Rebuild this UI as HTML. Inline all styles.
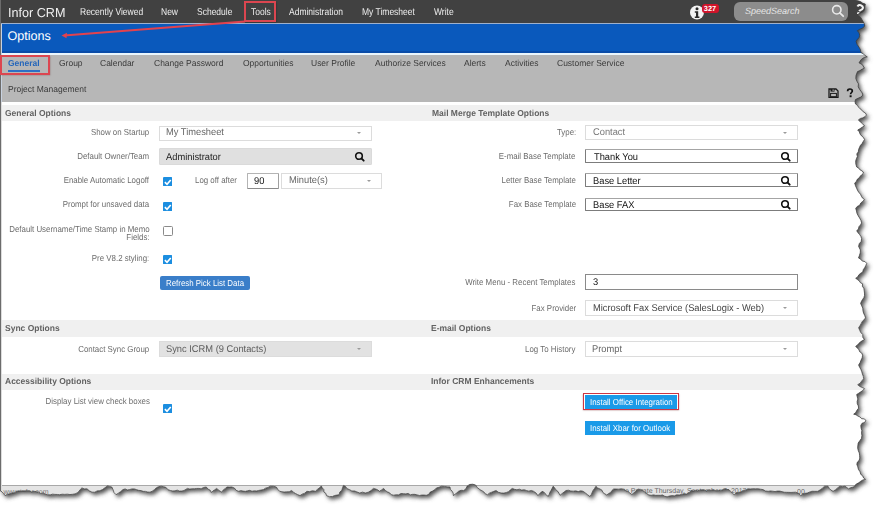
<!DOCTYPE html>
<html><head><meta charset="utf-8"><style>
html,body{margin:0;padding:0;background:#fff;width:879px;height:509px;overflow:hidden}
body{font-family:"Liberation Sans",sans-serif;position:relative;text-rendering:geometricPrecision}
#paper{position:absolute;left:0;top:0;width:879px;height:509px;clip-path:polygon(0px 0px, 855.3px 0.0px, 857.89px 0.8px, 860.49px 1.6px, 862.72px 3.27px, 865.3px 4.1px, 864.7px 7.7px, 864.4px 9.98px, 863.0px 11.8px, 860.03px 13.2px, 857.1px 14.7px, 858.8px 16.13px, 860.67px 17.4px, 861.8px 19.4px, 862.99px 21.51px, 864.2px 23.6px, 864.7px 26.0px, 862.58px 28.11px, 859.82px 29.21px, 857.3px 30.7px, 859.04px 32.78px, 859.7px 35.4px, 858.99px 37.67px, 857.39px 39.39px, 856.1px 41.3px, 857.14px 44.45px, 859.0px 47.2px, 860.4px 49.68px, 860.8px 52.5px, 863.18px 53.65px, 865.03px 55.58px, 867.3px 56.9px, 864.11px 57.52px, 861.4px 59.3px, 859.0px 62.8px, 862.4px 64.7px, 864.4px 68.2px, 862.05px 69.24px, 859.86px 70.6px, 857.5px 71.6px, 856.0px 75.5px, 855.84px 78.56px, 857.0px 81.4px, 858.44px 83.84px, 858.19px 86.82px, 859.5px 89.3px, 860.89px 91.12px, 862.2px 92.98px, 862.9px 95.2px, 860.7px 97.1px, 858.1px 98.3px, 855.5px 99.5px, 855.06px 101.75px, 855.5px 104.0px, 857.39px 105.26px, 858.56px 107.22px, 860.08px 108.85px, 861.91px 110.16px, 863.31px 111.9px, 865.36px 113.0px, 866.5px 115.0px, 864.77px 116.78px, 862.61px 117.85px, 860.22px 118.53px, 858.3px 120.0px, 860.44px 121.93px, 862.61px 123.81px, 864.5px 126.0px, 862.17px 127.23px, 860.0px 128.72px, 857.7px 130.0px, 859.29px 131.76px, 860.08px 134.08px, 861.55px 135.92px, 863.43px 137.47px, 864.5px 139.6px, 863.23px 141.53px, 862.11px 143.54px, 860.51px 145.27px, 859.5px 147.36px, 858.6px 149.5px, 858.31px 151.87px, 856.79px 153.94px, 857.38px 156.53px, 856.39px 158.73px, 855.7px 161.0px, 855.84px 164.06px, 856.7px 167.0px, 858.74px 168.13px, 860.16px 169.99px, 862.3px 171.01px, 863.6px 173.0px, 861.94px 174.51px, 860.36px 176.09px, 859.07px 177.93px, 857.27px 179.32px, 856.38px 181.51px, 854.7px 183.0px, 855.45px 185.67px, 856.58px 188.18px, 857.7px 190.7px, 858.97px 192.55px, 860.47px 194.22px, 861.4px 196.33px, 862.65px 198.2px, 864.5px 199.6px, 862.77px 201.39px, 860.82px 202.96px, 859.65px 205.31px, 857.26px 206.44px, 855.7px 208.4px, 856.48px 210.88px, 857.01px 213.46px, 858.21px 215.77px, 859.6px 218.0px, 860.88px 220.34px, 861.6px 222.9px, 860.51px 224.94px, 858.95px 226.67px, 858.49px 229.11px, 856.7px 230.7px, 857.97px 232.65px, 859.54px 234.41px, 860.83px 236.34px, 861.6px 238.6px, 861.18px 241.42px, 859.25px 243.67px, 858.6px 246.4px, 860.4px 250.0px, 860.27px 252.75px, 859.48px 255.35px, 858.5px 257.9px, 860.64px 259.15px, 862.31px 261.08px, 864.98px 261.54px, 866.7px 263.4px, 865.79px 265.58px, 864.69px 267.67px, 863.29px 269.63px, 862.8px 272.0px, 860.73px 273.24px, 858.91px 274.77px, 857.68px 276.96px, 855.7px 278.3px, 857.5px 279.58px, 859.27px 280.9px, 860.54px 282.85px, 862.6px 283.8px, 862.35px 286.24px, 863.84px 288.4px, 864.19px 290.75px, 864.49px 293.1px, 864.5px 295.5px, 863.86px 297.64px, 862.57px 299.46px, 861.46px 301.37px, 860.6px 303.4px, 861.67px 305.75px, 862.76px 308.1px, 862.96px 310.72px, 863.6px 313.2px, 864.72px 315.48px, 865.5px 317.9px, 864.04px 319.81px, 862.22px 321.45px, 861.14px 323.63px, 859.96px 325.73px, 858.6px 327.7px, 859.63px 330.13px, 860.74px 332.53px, 862.7px 334.5px, 862.82px 337.39px, 864.5px 339.5px, 862.5px 340.55px, 860.66px 341.81px, 858.97px 343.25px, 857.55px 345.06px, 855.7px 346.3px, 857.19px 347.99px, 858.9px 349.52px, 859.69px 351.76px, 861.7px 353.04px, 862.6px 355.2px, 862.16px 357.88px, 860.98px 360.25px, 860.04px 362.73px, 858.6px 365.0px, 859.64px 367.22px, 860.86px 369.39px, 861.76px 371.66px, 862.39px 374.03px, 863.29px 376.31px, 863.6px 378.8px, 861.77px 380.9px, 860.14px 383.2px, 857.7px 384.7px, 859.71px 386.45px, 862.15px 387.44px, 864.5px 388.6px, 862.85px 390.47px, 860.81px 391.83px, 858.78px 393.2px, 856.7px 394.5px, 857.21px 396.76px, 857.86px 398.99px, 857.17px 401.42px, 857.28px 403.73px, 858.33px 405.91px, 858.6px 408.2px, 856.98px 410.21px, 855.78px 412.57px, 853.7px 414.2px, 855.98px 414.72px, 857.87px 416.04px, 859.95px 416.96px, 861.63px 418.68px, 864.08px 418.86px, 865.9px 420.3px, 864.67px 422.47px, 862.05px 423.25px, 860.8px 425.4px, 861.04px 427.95px, 861.84px 430.45px, 861.56px 433.06px, 861.9px 435.6px, 861.49px 438.4px, 859.81px 440.69px, 858.2px 443.0px, 857.8px 445.8px, 857.7px 448.32px, 858.33px 450.72px, 859.33px 453.07px, 859.58px 455.53px, 859.8px 458.0px, 859.22px 460.27px, 857.46px 461.97px, 856.8px 464.2px, 857.76px 466.77px, 858.44px 469.44px, 860.02px 471.76px, 860.8px 474.4px, 862.65px 475.8px, 863.62px 478.03px, 865.5px 479.4px, 862.93px 479.93px, 860.75px 481.23px, 858.7px 482.8px, 856.73px 483.87px, 855.02px 485.26px, 853.6px 487.0px, 850.94px 487.58px, 848.5px 488.8px, 845.0px 486.2px, 842.45px 486.58px, 839.9px 486.2px, 837.62px 487.88px, 835.49px 489.76px, 833.1px 491.3px, 830.93px 490.07px, 829.23px 488.37px, 828.0px 486.2px, 824.6px 486.2px, 822.48px 488.15px, 820.2px 489.87px, 817.7px 491.3px, 814.84px 491.33px, 811.97px 491.26px, 809.2px 492.2px, 807.1px 493.12px, 804.72px 493.33px, 802.57px 494.12px, 800.7px 495.6px, 798.5px 493.37px, 795.6px 492.2px, 793.31px 492.31px, 791.02px 492.44px, 788.74px 492.36px, 786.45px 492.32px, 784.17px 492.24px, 781.91px 491.58px, 779.64px 491.11px, 777.35px 491.12px, 775.05px 491.55px, 772.77px 491.24px, 770.5px 490.96px, 768.2px 491.3px, 765.47px 491.0px, 763.1px 489.6px, 760.56px 489.24px, 758.03px 488.76px, 755.47px 488.81px, 752.92px 488.72px, 750.35px 488.96px, 747.8px 488.8px, 745.69px 490.2px, 743.07px 490.39px, 741.04px 491.97px, 738.5px 492.35px, 736.12px 493.11px, 734.1px 494.7px, 732.3px 493.1px, 730.6px 491.4px, 729.0px 489.6px, 728.0px 489.6px, 725.52px 489.1px, 723.1px 489.54px, 720.7px 490.45px, 718.26px 490.64px, 715.81px 490.73px, 713.31px 489.81px, 710.9px 490.5px, 708.69px 490.07px, 706.48px 491.0px, 704.27px 490.04px, 702.06px 489.83px, 699.84px 490.28px, 697.63px 490.71px, 695.42px 490.43px, 693.21px 491.02px, 691.0px 490.5px, 689.17px 492.79px, 686.5px 494.0px, 683.98px 493.7px, 681.62px 494.49px, 679.22px 495.01px, 676.71px 494.8px, 674.39px 495.84px, 671.88px 495.58px, 669.46px 496.0px, 667.1px 496.8px, 664.7px 496.28px, 662.6px 495.0px, 660.32px 495.35px, 658.03px 495.29px, 655.75px 495.36px, 653.47px 494.88px, 651.18px 495.34px, 648.9px 495.0px, 646.93px 493.59px, 644.78px 492.41px, 643.2px 490.5px, 640.46px 489.39px, 637.5px 489.4px, 635.77px 491.25px, 633.81px 492.84px, 631.9px 494.5px, 629.96px 493.13px, 628.2px 491.47px, 625.84px 490.77px, 623.9px 489.4px, 621.37px 488.72px, 618.8px 489.2px, 616.25px 489.06px, 613.7px 489.0px, 611.95px 490.48px, 610.69px 492.51px, 608.58px 493.56px, 606.8px 495.0px, 604.81px 493.83px, 602.94px 492.52px, 601.98px 490.19px, 600.0px 489.0px, 597.69px 487.98px, 595.9px 486.2px, 594.73px 488.28px, 593.23px 490.16px, 592.23px 492.34px, 591.31px 494.56px, 589.9px 496.5px, 587.65px 494.75px, 585.41px 492.97px, 583.1px 491.3px, 580.68px 490.79px, 578.19px 491.62px, 575.78px 490.87px, 573.31px 491.19px, 570.87px 491.04px, 568.46px 490.23px, 566.0px 490.5px, 564.03px 492.09px, 562.01px 493.63px, 560.1px 495.3px, 559.01px 493.26px, 557.8px 491.31px, 555.9px 489.89px, 554.71px 487.92px, 553.2px 486.2px, 552.17px 488.26px, 551.14px 490.31px, 549.9px 492.26px, 549.18px 494.47px, 548.1px 496.5px, 546.43px 494.73px, 544.68px 493.05px, 543.0px 491.3px, 540.9px 492.26px, 539.42px 493.95px, 537.9px 495.6px, 536.12px 493.08px, 533.6px 491.3px, 531.28px 490.44px, 528.81px 491.15px, 526.47px 490.5px, 524.14px 489.72px, 521.7px 490.1px, 519.43px 489.21px, 516.91px 489.75px, 514.56px 489.35px, 512.3px 488.4px, 510.35px 489.83px, 508.64px 491.63px, 506.3px 492.5px, 503.79px 493.11px, 501.2px 493.0px, 498.39px 492.29px, 496.1px 490.5px, 493.85px 491.34px, 491.63px 492.24px, 489.41px 493.15px, 487.5px 494.7px, 485.33px 493.83px, 483.87px 491.9px, 481.93px 490.69px, 479.9px 489.6px, 477.38px 487.64px, 475.6px 485.0px, 472.64px 484.22px, 469.6px 484.5px, 467.17px 486.04px, 465.95px 488.78px, 463.7px 490.5px, 461.0px 490.27px, 458.5px 491.3px, 456.89px 492.84px, 455.11px 494.18px, 453.4px 495.6px, 453.19px 493.2px, 452.13px 491.13px, 450.41px 489.32px, 450.0px 487.0px, 447.19px 486.83px, 444.4px 486.44px, 441.6px 486.2px, 439.12px 487.26px, 436.5px 487.9px, 434.71px 489.72px, 432.57px 491.07px, 430.2px 492.09px, 428.74px 494.36px, 426.3px 495.3px, 424.03px 495.07px, 421.74px 495.07px, 419.42px 495.51px, 417.17px 494.91px, 414.92px 494.35px, 412.63px 494.35px, 410.31px 494.82px, 408.12px 493.38px, 405.8px 493.9px, 403.36px 493.63px, 400.93px 493.51px, 398.58px 494.85px, 396.15px 494.76px, 393.75px 495.21px, 391.3px 494.7px, 389.62px 492.82px, 387.25px 491.8px, 385.2px 490.38px, 383.6px 488.4px, 381.56px 489.94px, 379.4px 491.3px, 377.65px 489.81px, 375.59px 488.96px, 373.4px 488.4px, 371.05px 490.57px, 368.3px 492.2px, 365.48px 492.96px, 362.51px 492.15px, 359.7px 493.0px, 357.18px 492.06px, 354.69px 491.03px, 351.87px 491.0px, 349.5px 489.6px, 347.14px 488.71px, 345.65px 486.58px, 343.5px 485.4px, 342.52px 487.77px, 341.89px 490.3px, 339.72px 492.12px, 339.2px 494.7px, 336.89px 495.12px, 334.56px 495.49px, 332.4px 496.5px, 329.36px 496.63px, 326.5px 495.6px, 325.9px 493.42px, 323.89px 492.01px, 323.83px 489.54px, 322.28px 487.87px, 321.3px 485.9px, 319.49px 487.87px, 317.32px 489.45px, 315.4px 491.3px, 312.53px 490.7px, 309.67px 491.62px, 306.8px 491.3px, 304.81px 493.17px, 302.25px 494.13px, 300.0px 495.6px, 297.71px 494.64px, 295.52px 493.52px, 293.45px 492.18px, 291.6px 490.5px, 289.21px 491.76px, 286.5px 491.8px, 284.2px 492.05px, 281.95px 491.73px, 279.7px 491.3px, 277.79px 489.32px, 276.3px 487.0px, 273.35px 486.24px, 270.3px 486.2px, 268.06px 487.45px, 265.6px 488.15px, 263.42px 489.54px, 260.9px 490.1px, 258.69px 490.43px, 256.5px 491.01px, 254.26px 490.81px, 252.06px 491.26px, 249.78px 490.37px, 247.58px 490.75px, 245.38px 491.37px, 243.14px 491.1px, 240.89px 490.57px, 238.7px 491.3px, 236.14px 490.33px, 234.41px 488.06px, 231.9px 487.0px, 229.35px 487.09px, 226.8px 487.0px, 225.1px 488.74px, 223.07px 490.14px, 221.7px 492.2px, 219.06px 490.42px, 216.6px 488.4px, 214.86px 489.76px, 212.97px 490.93px, 211.4px 492.5px, 210.2px 490.21px, 207.84px 488.98px, 206.3px 487.0px, 203.6px 487.46px, 201.2px 488.8px, 198.93px 488.44px, 196.64px 488.48px, 194.35px 488.73px, 192.06px 488.75px, 189.77px 489.09px, 187.5px 488.4px, 184.0px 490.5px, 181.75px 491.02px, 179.5px 491.1px, 177.25px 490.16px, 175.0px 490.84px, 172.75px 490.97px, 170.5px 490.5px, 167.95px 489.74px, 166.2px 487.55px, 163.7px 486.7px, 161.1px 486.18px, 158.5px 486.7px, 156.25px 487.87px, 154.42px 489.71px, 152.32px 491.13px, 150.0px 492.2px, 147.7px 492.05px, 145.49px 491.39px, 143.16px 491.37px, 140.99px 490.54px, 138.69px 490.36px, 136.5px 489.6px, 134.23px 488.95px, 131.97px 488.94px, 129.7px 489.53px, 127.43px 489.96px, 125.17px 488.95px, 122.9px 489.6px, 120.76px 491.51px, 118.42px 493.16px, 116.0px 494.7px, 113.99px 492.47px, 113.05px 489.65px, 111.8px 487.0px, 109.64px 486.48px, 107.5px 485.9px, 104.95px 487.75px, 102.4px 489.6px, 99.9px 490.66px, 97.2px 490.89px, 94.77px 492.22px, 92.0px 492.2px, 89.31px 490.77px, 87.0px 488.8px, 84.35px 488.92px, 81.9px 487.9px, 80.27px 489.51px, 78.87px 491.38px, 77.16px 492.9px, 75.0px 493.9px, 72.46px 494.31px, 69.92px 494.54px, 67.34px 494.18px, 64.8px 494.39px, 62.23px 494.22px, 59.7px 494.7px, 57.32px 494.48px, 54.94px 494.4px, 52.56px 494.17px, 50.18px 494.85px, 47.8px 494.7px, 45.44px 494.37px, 43.36px 492.91px, 40.78px 493.48px, 38.68px 492.13px, 36.35px 491.67px, 34.0px 491.3px, 31.57px 491.94px, 29.14px 490.83px, 26.71px 490.75px, 24.29px 491.12px, 21.86px 490.97px, 19.43px 490.86px, 17.0px 491.3px, 14.79px 492.63px, 12.23px 492.99px, 9.86px 493.87px, 7.32px 494.3px, 5.1px 495.6px, 3.7px 493.6px, 2.02px 491.88px, 0px 490.5px);}
</style></head><body>
<svg style="position:absolute;left:0;top:0" width="879" height="509">
<defs><filter id="sh" x="-5%" y="-5%" width="110%" height="110%"><feGaussianBlur stdDeviation="2"/></filter></defs>
<polygon points="0,0 855.3,0.0 857.89,0.8 860.49,1.6 862.72,3.27 865.3,4.1 864.7,7.7 864.4,9.98 863.0,11.8 860.03,13.2 857.1,14.7 858.8,16.13 860.67,17.4 861.8,19.4 862.99,21.51 864.2,23.6 864.7,26.0 862.58,28.11 859.82,29.21 857.3,30.7 859.04,32.78 859.7,35.4 858.99,37.67 857.39,39.39 856.1,41.3 857.14,44.45 859.0,47.2 860.4,49.68 860.8,52.5 863.18,53.65 865.03,55.58 867.3,56.9 864.11,57.52 861.4,59.3 859.0,62.8 862.4,64.7 864.4,68.2 862.05,69.24 859.86,70.6 857.5,71.6 856.0,75.5 855.84,78.56 857.0,81.4 858.44,83.84 858.19,86.82 859.5,89.3 860.89,91.12 862.2,92.98 862.9,95.2 860.7,97.1 858.1,98.3 855.5,99.5 855.06,101.75 855.5,104.0 857.39,105.26 858.56,107.22 860.08,108.85 861.91,110.16 863.31,111.9 865.36,113.0 866.5,115.0 864.77,116.78 862.61,117.85 860.22,118.53 858.3,120.0 860.44,121.93 862.61,123.81 864.5,126.0 862.17,127.23 860.0,128.72 857.7,130.0 859.29,131.76 860.08,134.08 861.55,135.92 863.43,137.47 864.5,139.6 863.23,141.53 862.11,143.54 860.51,145.27 859.5,147.36 858.6,149.5 858.31,151.87 856.79,153.94 857.38,156.53 856.39,158.73 855.7,161.0 855.84,164.06 856.7,167.0 858.74,168.13 860.16,169.99 862.3,171.01 863.6,173.0 861.94,174.51 860.36,176.09 859.07,177.93 857.27,179.32 856.38,181.51 854.7,183.0 855.45,185.67 856.58,188.18 857.7,190.7 858.97,192.55 860.47,194.22 861.4,196.33 862.65,198.2 864.5,199.6 862.77,201.39 860.82,202.96 859.65,205.31 857.26,206.44 855.7,208.4 856.48,210.88 857.01,213.46 858.21,215.77 859.6,218.0 860.88,220.34 861.6,222.9 860.51,224.94 858.95,226.67 858.49,229.11 856.7,230.7 857.97,232.65 859.54,234.41 860.83,236.34 861.6,238.6 861.18,241.42 859.25,243.67 858.6,246.4 860.4,250.0 860.27,252.75 859.48,255.35 858.5,257.9 860.64,259.15 862.31,261.08 864.98,261.54 866.7,263.4 865.79,265.58 864.69,267.67 863.29,269.63 862.8,272.0 860.73,273.24 858.91,274.77 857.68,276.96 855.7,278.3 857.5,279.58 859.27,280.9 860.54,282.85 862.6,283.8 862.35,286.24 863.84,288.4 864.19,290.75 864.49,293.1 864.5,295.5 863.86,297.64 862.57,299.46 861.46,301.37 860.6,303.4 861.67,305.75 862.76,308.1 862.96,310.72 863.6,313.2 864.72,315.48 865.5,317.9 864.04,319.81 862.22,321.45 861.14,323.63 859.96,325.73 858.6,327.7 859.63,330.13 860.74,332.53 862.7,334.5 862.82,337.39 864.5,339.5 862.5,340.55 860.66,341.81 858.97,343.25 857.55,345.06 855.7,346.3 857.19,347.99 858.9,349.52 859.69,351.76 861.7,353.04 862.6,355.2 862.16,357.88 860.98,360.25 860.04,362.73 858.6,365.0 859.64,367.22 860.86,369.39 861.76,371.66 862.39,374.03 863.29,376.31 863.6,378.8 861.77,380.9 860.14,383.2 857.7,384.7 859.71,386.45 862.15,387.44 864.5,388.6 862.85,390.47 860.81,391.83 858.78,393.2 856.7,394.5 857.21,396.76 857.86,398.99 857.17,401.42 857.28,403.73 858.33,405.91 858.6,408.2 856.98,410.21 855.78,412.57 853.7,414.2 855.98,414.72 857.87,416.04 859.95,416.96 861.63,418.68 864.08,418.86 865.9,420.3 864.67,422.47 862.05,423.25 860.8,425.4 861.04,427.95 861.84,430.45 861.56,433.06 861.9,435.6 861.49,438.4 859.81,440.69 858.2,443.0 857.8,445.8 857.7,448.32 858.33,450.72 859.33,453.07 859.58,455.53 859.8,458.0 859.22,460.27 857.46,461.97 856.8,464.2 857.76,466.77 858.44,469.44 860.02,471.76 860.8,474.4 862.65,475.8 863.62,478.03 865.5,479.4 862.93,479.93 860.75,481.23 858.7,482.8 856.73,483.87 855.02,485.26 853.6,487.0 850.94,487.58 848.5,488.8 845.0,486.2 842.45,486.58 839.9,486.2 837.62,487.88 835.49,489.76 833.1,491.3 830.93,490.07 829.23,488.37 828.0,486.2 824.6,486.2 822.48,488.15 820.2,489.87 817.7,491.3 814.84,491.33 811.97,491.26 809.2,492.2 807.1,493.12 804.72,493.33 802.57,494.12 800.7,495.6 798.5,493.37 795.6,492.2 793.31,492.31 791.02,492.44 788.74,492.36 786.45,492.32 784.17,492.24 781.91,491.58 779.64,491.11 777.35,491.12 775.05,491.55 772.77,491.24 770.5,490.96 768.2,491.3 765.47,491.0 763.1,489.6 760.56,489.24 758.03,488.76 755.47,488.81 752.92,488.72 750.35,488.96 747.8,488.8 745.69,490.2 743.07,490.39 741.04,491.97 738.5,492.35 736.12,493.11 734.1,494.7 732.3,493.1 730.6,491.4 729.0,489.6 728.0,489.6 725.52,489.1 723.1,489.54 720.7,490.45 718.26,490.64 715.81,490.73 713.31,489.81 710.9,490.5 708.69,490.07 706.48,491.0 704.27,490.04 702.06,489.83 699.84,490.28 697.63,490.71 695.42,490.43 693.21,491.02 691.0,490.5 689.17,492.79 686.5,494.0 683.98,493.7 681.62,494.49 679.22,495.01 676.71,494.8 674.39,495.84 671.88,495.58 669.46,496.0 667.1,496.8 664.7,496.28 662.6,495.0 660.32,495.35 658.03,495.29 655.75,495.36 653.47,494.88 651.18,495.34 648.9,495.0 646.93,493.59 644.78,492.41 643.2,490.5 640.46,489.39 637.5,489.4 635.77,491.25 633.81,492.84 631.9,494.5 629.96,493.13 628.2,491.47 625.84,490.77 623.9,489.4 621.37,488.72 618.8,489.2 616.25,489.06 613.7,489.0 611.95,490.48 610.69,492.51 608.58,493.56 606.8,495.0 604.81,493.83 602.94,492.52 601.98,490.19 600.0,489.0 597.69,487.98 595.9,486.2 594.73,488.28 593.23,490.16 592.23,492.34 591.31,494.56 589.9,496.5 587.65,494.75 585.41,492.97 583.1,491.3 580.68,490.79 578.19,491.62 575.78,490.87 573.31,491.19 570.87,491.04 568.46,490.23 566.0,490.5 564.03,492.09 562.01,493.63 560.1,495.3 559.01,493.26 557.8,491.31 555.9,489.89 554.71,487.92 553.2,486.2 552.17,488.26 551.14,490.31 549.9,492.26 549.18,494.47 548.1,496.5 546.43,494.73 544.68,493.05 543.0,491.3 540.9,492.26 539.42,493.95 537.9,495.6 536.12,493.08 533.6,491.3 531.28,490.44 528.81,491.15 526.47,490.5 524.14,489.72 521.7,490.1 519.43,489.21 516.91,489.75 514.56,489.35 512.3,488.4 510.35,489.83 508.64,491.63 506.3,492.5 503.79,493.11 501.2,493.0 498.39,492.29 496.1,490.5 493.85,491.34 491.63,492.24 489.41,493.15 487.5,494.7 485.33,493.83 483.87,491.9 481.93,490.69 479.9,489.6 477.38,487.64 475.6,485.0 472.64,484.22 469.6,484.5 467.17,486.04 465.95,488.78 463.7,490.5 461.0,490.27 458.5,491.3 456.89,492.84 455.11,494.18 453.4,495.6 453.19,493.2 452.13,491.13 450.41,489.32 450.0,487.0 447.19,486.83 444.4,486.44 441.6,486.2 439.12,487.26 436.5,487.9 434.71,489.72 432.57,491.07 430.2,492.09 428.74,494.36 426.3,495.3 424.03,495.07 421.74,495.07 419.42,495.51 417.17,494.91 414.92,494.35 412.63,494.35 410.31,494.82 408.12,493.38 405.8,493.9 403.36,493.63 400.93,493.51 398.58,494.85 396.15,494.76 393.75,495.21 391.3,494.7 389.62,492.82 387.25,491.8 385.2,490.38 383.6,488.4 381.56,489.94 379.4,491.3 377.65,489.81 375.59,488.96 373.4,488.4 371.05,490.57 368.3,492.2 365.48,492.96 362.51,492.15 359.7,493.0 357.18,492.06 354.69,491.03 351.87,491.0 349.5,489.6 347.14,488.71 345.65,486.58 343.5,485.4 342.52,487.77 341.89,490.3 339.72,492.12 339.2,494.7 336.89,495.12 334.56,495.49 332.4,496.5 329.36,496.63 326.5,495.6 325.9,493.42 323.89,492.01 323.83,489.54 322.28,487.87 321.3,485.9 319.49,487.87 317.32,489.45 315.4,491.3 312.53,490.7 309.67,491.62 306.8,491.3 304.81,493.17 302.25,494.13 300.0,495.6 297.71,494.64 295.52,493.52 293.45,492.18 291.6,490.5 289.21,491.76 286.5,491.8 284.2,492.05 281.95,491.73 279.7,491.3 277.79,489.32 276.3,487.0 273.35,486.24 270.3,486.2 268.06,487.45 265.6,488.15 263.42,489.54 260.9,490.1 258.69,490.43 256.5,491.01 254.26,490.81 252.06,491.26 249.78,490.37 247.58,490.75 245.38,491.37 243.14,491.1 240.89,490.57 238.7,491.3 236.14,490.33 234.41,488.06 231.9,487.0 229.35,487.09 226.8,487.0 225.1,488.74 223.07,490.14 221.7,492.2 219.06,490.42 216.6,488.4 214.86,489.76 212.97,490.93 211.4,492.5 210.2,490.21 207.84,488.98 206.3,487.0 203.6,487.46 201.2,488.8 198.93,488.44 196.64,488.48 194.35,488.73 192.06,488.75 189.77,489.09 187.5,488.4 184.0,490.5 181.75,491.02 179.5,491.1 177.25,490.16 175.0,490.84 172.75,490.97 170.5,490.5 167.95,489.74 166.2,487.55 163.7,486.7 161.1,486.18 158.5,486.7 156.25,487.87 154.42,489.71 152.32,491.13 150.0,492.2 147.7,492.05 145.49,491.39 143.16,491.37 140.99,490.54 138.69,490.36 136.5,489.6 134.23,488.95 131.97,488.94 129.7,489.53 127.43,489.96 125.17,488.95 122.9,489.6 120.76,491.51 118.42,493.16 116.0,494.7 113.99,492.47 113.05,489.65 111.8,487.0 109.64,486.48 107.5,485.9 104.95,487.75 102.4,489.6 99.9,490.66 97.2,490.89 94.77,492.22 92.0,492.2 89.31,490.77 87.0,488.8 84.35,488.92 81.9,487.9 80.27,489.51 78.87,491.38 77.16,492.9 75.0,493.9 72.46,494.31 69.92,494.54 67.34,494.18 64.8,494.39 62.23,494.22 59.7,494.7 57.32,494.48 54.94,494.4 52.56,494.17 50.18,494.85 47.8,494.7 45.44,494.37 43.36,492.91 40.78,493.48 38.68,492.13 36.35,491.67 34.0,491.3 31.57,491.94 29.14,490.83 26.71,490.75 24.29,491.12 21.86,490.97 19.43,490.86 17.0,491.3 14.79,492.63 12.23,492.99 9.86,493.87 7.32,494.3 5.1,495.6 3.7,493.6 2.02,491.88 0,490.5" fill="#505050" transform="translate(2.4,2.8)" filter="url(#sh)"/>
</svg>
<div id="paper">
<div style="position:absolute;left:0px;top:0px;width:879px;height:23px;background:#414141"></div>
<div style="position:absolute;left:0px;top:23px;width:879px;height:1px;background:#9fb1cc"></div>
<div style="position:absolute;left:0px;top:24px;width:879px;height:28.5px;background:#0a59bc"></div>
<div style="position:absolute;left:0px;top:51px;width:879px;height:1.5px;background:#0a4ca8"></div>
<div style="position:absolute;left:0px;top:52.5px;width:879px;height:2.5px;background:#eaf6fd"></div>
<div style="position:absolute;left:0px;top:55px;width:879px;height:47px;background:#b7b7b7"></div>
<div style="position:absolute;left:0px;top:102px;width:879px;height:407px;background:#ffffff"></div>
<div style="position:absolute;left:2px;top:105px;width:877px;height:16px;background:#f0f0f0"></div>
<div style="position:absolute;left:2px;top:320px;width:877px;height:17px;background:#f0f0f0"></div>
<div style="position:absolute;left:2px;top:374px;width:877px;height:16px;background:#f0f0f0"></div>
<div style="position:absolute;left:0px;top:485px;width:879px;height:24px;background:#e4e4e4;border-top:1px solid #a8a8a8"></div>
<div style="position:absolute;left:0px;top:0px;width:1px;height:509px;background:#6c6c6c"></div>
<div style="position:absolute;left:1px;top:102px;width:1px;height:407px;background:#dcdcdc"></div>
<div style="position:absolute;left:1px;top:24px;width:1px;height:78px;background:#c8d2e0"></div>
<div style="position:absolute;left:7.5px;transform:scaleX(0.97);transform-origin:left top;top:5.80px;font-size:13px;line-height:13px;color:#f0f0f0;font-weight:normal;white-space:nowrap;">Infor CRM</div>
<div style="position:absolute;left:79.5px;transform:scaleX(0.85);transform-origin:left top;top:8.34px;font-size:10px;line-height:10px;color:#eeeeee;font-weight:normal;white-space:nowrap;">Recently Viewed</div>
<div style="position:absolute;left:161px;transform:scaleX(0.85);transform-origin:left top;top:8.34px;font-size:10px;line-height:10px;color:#eeeeee;font-weight:normal;white-space:nowrap;">New</div>
<div style="position:absolute;left:197px;transform:scaleX(0.85);transform-origin:left top;top:8.34px;font-size:10px;line-height:10px;color:#eeeeee;font-weight:normal;white-space:nowrap;">Schedule</div>
<div style="position:absolute;left:251px;transform:scaleX(0.85);transform-origin:left top;top:8.34px;font-size:10px;line-height:10px;color:#eeeeee;font-weight:normal;white-space:nowrap;">Tools</div>
<div style="position:absolute;left:289.2px;transform:scaleX(0.85);transform-origin:left top;top:8.34px;font-size:10px;line-height:10px;color:#eeeeee;font-weight:normal;white-space:nowrap;">Administration</div>
<div style="position:absolute;left:362.3px;transform:scaleX(0.85);transform-origin:left top;top:8.34px;font-size:10px;line-height:10px;color:#eeeeee;font-weight:normal;white-space:nowrap;">My Timesheet</div>
<div style="position:absolute;left:434.3px;transform:scaleX(0.85);transform-origin:left top;top:8.34px;font-size:10px;line-height:10px;color:#eeeeee;font-weight:normal;white-space:nowrap;">Write</div>
<svg style="position:absolute;left:689px;top:5px" width="16" height="16" viewBox="0 0 16 16"><circle cx="8" cy="7.5" r="7" fill="#f2f2f2"/><circle cx="8" cy="3.8" r="1.5" fill="#2a2a2a"/><path d="M5.8 6.2h3.4v5.2h1.2v1.5H5.8v-1.5h1.2V7.7H5.8z" fill="#2a2a2a"/></svg>
<div style="position:absolute;left:701.5px;top:4px;width:17.0px;height:8.5px;background:#d0142a;border-radius:3px"></div>
<div style="position:absolute;left:703.8px;top:4.74px;font-size:7.4px;line-height:7.4px;color:#ffffff;font-weight:bold;white-space:nowrap;">327</div>
<div style="position:absolute;left:734px;top:2px;width:114px;height:18.5px;background:#8c8c8c;border-radius:6px"></div>
<div style="position:absolute;left:745px;top:6.58px;font-size:9px;line-height:9px;color:#e6e6e6;font-weight:normal;white-space:nowrap;font-style:italic">SpeedSearch</div>
<svg style="position:absolute;left:831px;top:4px" width="14" height="14" viewBox="0 0 14 14"><circle cx="5.8" cy="5.8" r="4.2" fill="none" stroke="#e8e8e8" stroke-width="1.6"/><path d="M8.8 8.8l3.4 3.4" stroke="#e8e8e8" stroke-width="1.8" stroke-linecap="round"/></svg>
<svg style="position:absolute;left:853.5px;top:4px" width="11" height="11" viewBox="0 0 11 11"><g transform="rotate(25 5.5 5.5)"><path d="M2.4 3.6C2.4 1.8 3.6 1.1 5.2 1.1C6.9 1.1 8 2 8 3.4C8 5 6 5.3 6 7.2" fill="none" stroke="#f2f2f2" stroke-width="2"/><rect x="4.9" y="8.3" width="2.3" height="2.1" fill="#f2f2f2"/></g></svg>
<div style="position:absolute;left:7.5px;top:29.73px;font-size:12.6px;line-height:12.6px;color:#ffffff;font-weight:normal;white-space:nowrap;">Options</div>
<div style="position:absolute;left:8.2px;transform:scaleX(0.977);transform-origin:left top;top:59.44px;font-size:8.7px;line-height:8.7px;color:#2566ba;font-weight:bold;white-space:nowrap;">General</div>
<div style="position:absolute;left:58.7px;transform:scaleX(0.977);transform-origin:left top;top:59.44px;font-size:8.7px;line-height:8.7px;color:#3a3a3a;font-weight:normal;white-space:nowrap;">Group</div>
<div style="position:absolute;left:99.7px;transform:scaleX(0.977);transform-origin:left top;top:59.44px;font-size:8.7px;line-height:8.7px;color:#3a3a3a;font-weight:normal;white-space:nowrap;">Calendar</div>
<div style="position:absolute;left:153.6px;transform:scaleX(0.977);transform-origin:left top;top:59.44px;font-size:8.7px;line-height:8.7px;color:#3a3a3a;font-weight:normal;white-space:nowrap;">Change Password</div>
<div style="position:absolute;left:243px;transform:scaleX(0.977);transform-origin:left top;top:59.44px;font-size:8.7px;line-height:8.7px;color:#3a3a3a;font-weight:normal;white-space:nowrap;">Opportunities</div>
<div style="position:absolute;left:311.4px;transform:scaleX(0.977);transform-origin:left top;top:59.44px;font-size:8.7px;line-height:8.7px;color:#3a3a3a;font-weight:normal;white-space:nowrap;">User Profile</div>
<div style="position:absolute;left:374.5px;transform:scaleX(0.977);transform-origin:left top;top:59.44px;font-size:8.7px;line-height:8.7px;color:#3a3a3a;font-weight:normal;white-space:nowrap;">Authorize Services</div>
<div style="position:absolute;left:464.3px;transform:scaleX(0.977);transform-origin:left top;top:59.44px;font-size:8.7px;line-height:8.7px;color:#3a3a3a;font-weight:normal;white-space:nowrap;">Alerts</div>
<div style="position:absolute;left:504.6px;transform:scaleX(0.977);transform-origin:left top;top:59.44px;font-size:8.7px;line-height:8.7px;color:#3a3a3a;font-weight:normal;white-space:nowrap;">Activities</div>
<div style="position:absolute;left:557.1px;transform:scaleX(0.977);transform-origin:left top;top:59.44px;font-size:8.7px;line-height:8.7px;color:#3a3a3a;font-weight:normal;white-space:nowrap;">Customer Service</div>
<div style="position:absolute;left:8.2px;top:70px;width:31.8px;height:2px;background:#2d70c6"></div>
<div style="position:absolute;left:7.5px;transform:scaleX(0.977);transform-origin:left top;top:85.04px;font-size:8.7px;line-height:8.7px;color:#3a3a3a;font-weight:normal;white-space:nowrap;">Project Management</div>
<svg style="position:absolute;left:827.5px;top:87.5px" width="11" height="10" viewBox="0 0 11 10"><path d="M1 1H8L10 3V9.3H1Z" fill="none" stroke="#1a1a1a" stroke-width="1.3"/><rect x="2.5" y="1" width="4" height="2.6" fill="#1a1a1a"/><rect x="4.6" y="1.4" width="1" height="1.6" fill="#bbb"/><rect x="2.6" y="5.4" width="5.8" height="3.3" fill="none" stroke="#1a1a1a" stroke-width="1"/></svg>
<svg style="position:absolute;left:846px;top:88px" width="8" height="10" viewBox="0 0 8 10"><path d="M1.6 3.2C1.6 1.6 2.6 1 3.9 1C5.3 1 6.3 1.8 6.3 3C6.3 4.4 4.6 4.6 4.6 6.2" fill="none" stroke="#111" stroke-width="1.7"/><rect x="3.6" y="7.3" width="2" height="1.9" fill="#111"/></svg>
<div style="position:absolute;left:4.6px;transform:scaleX(0.977);transform-origin:left top;top:109.04px;font-size:8.7px;line-height:8.7px;color:#626262;font-weight:bold;white-space:nowrap;">General Options</div>
<div style="position:absolute;left:431.8px;transform:scaleX(0.977);transform-origin:left top;top:109.04px;font-size:8.7px;line-height:8.7px;color:#626262;font-weight:bold;white-space:nowrap;">Mail Merge Template Options</div>
<div style="position:absolute;left:4.6px;transform:scaleX(0.977);transform-origin:left top;top:324.04px;font-size:8.7px;line-height:8.7px;color:#626262;font-weight:bold;white-space:nowrap;">Sync Options</div>
<div style="position:absolute;left:431.2px;transform:scaleX(0.977);transform-origin:left top;top:324.04px;font-size:8.7px;line-height:8.7px;color:#626262;font-weight:bold;white-space:nowrap;">E-mail Options</div>
<div style="position:absolute;left:4.6px;transform:scaleX(0.977);transform-origin:left top;top:377.24px;font-size:8.7px;line-height:8.7px;color:#626262;font-weight:bold;white-space:nowrap;">Accessibility Options</div>
<div style="position:absolute;left:431.2px;transform:scaleX(0.977);transform-origin:left top;top:377.24px;font-size:8.7px;line-height:8.7px;color:#626262;font-weight:bold;white-space:nowrap;">Infor CRM Enhancements</div>
<div style="position:absolute;right:729.5px;text-align:right;transform:scaleX(0.908);transform-origin:right top;top:128.44px;font-size:8.7px;line-height:8.7px;color:#6c6c6c;font-weight:normal;white-space:nowrap;">Show on Startup</div>
<div style="position:absolute;right:729.5px;text-align:right;transform:scaleX(0.908);transform-origin:right top;top:151.54px;font-size:8.7px;line-height:8.7px;color:#6c6c6c;font-weight:normal;white-space:nowrap;">Default Owner/Team</div>
<div style="position:absolute;right:729.5px;text-align:right;transform:scaleX(0.908);transform-origin:right top;top:175.64px;font-size:8.7px;line-height:8.7px;color:#6c6c6c;font-weight:normal;white-space:nowrap;">Enable Automatic Logoff</div>
<div style="position:absolute;right:729.5px;text-align:right;transform:scaleX(0.908);transform-origin:right top;top:199.74px;font-size:8.7px;line-height:8.7px;color:#6c6c6c;font-weight:normal;white-space:nowrap;">Prompt for unsaved data</div>
<div style="position:absolute;right:729.5px;text-align:right;transform:scaleX(0.908);transform-origin:right top;top:225.24px;font-size:8.7px;line-height:8.7px;color:#6c6c6c;font-weight:normal;white-space:nowrap;">Default Username/Time Stamp in Memo</div>
<div style="position:absolute;right:729.5px;text-align:right;transform:scaleX(0.908);transform-origin:right top;top:233.04px;font-size:8.7px;line-height:8.7px;color:#6c6c6c;font-weight:normal;white-space:nowrap;">Fields:</div>
<div style="position:absolute;right:729.5px;text-align:right;transform:scaleX(0.908);transform-origin:right top;top:253.84px;font-size:8.7px;line-height:8.7px;color:#6c6c6c;font-weight:normal;white-space:nowrap;">Pre V8.2 styling:</div>
<div style="position:absolute;right:729.5px;text-align:right;transform:scaleX(0.908);transform-origin:right top;top:345.44px;font-size:8.7px;line-height:8.7px;color:#6c6c6c;font-weight:normal;white-space:nowrap;">Contact Sync Group</div>
<div style="position:absolute;right:729.5px;text-align:right;transform:scaleX(0.908);transform-origin:right top;top:397.14px;font-size:8.7px;line-height:8.7px;color:#6c6c6c;font-weight:normal;white-space:nowrap;">Display List view check boxes</div>
<div style="position:absolute;left:194.6px;transform:scaleX(0.908);transform-origin:left top;top:176.24px;font-size:8.7px;line-height:8.7px;color:#6c6c6c;font-weight:normal;white-space:nowrap;">Log off after</div>
<div style="position:absolute;right:303.20000000000005px;text-align:right;transform:scaleX(0.908);transform-origin:right top;top:128.04px;font-size:8.7px;line-height:8.7px;color:#6c6c6c;font-weight:normal;white-space:nowrap;">Type:</div>
<div style="position:absolute;right:303.20000000000005px;text-align:right;transform:scaleX(0.908);transform-origin:right top;top:152.14px;font-size:8.7px;line-height:8.7px;color:#6c6c6c;font-weight:normal;white-space:nowrap;">E-mail Base Template</div>
<div style="position:absolute;right:303.20000000000005px;text-align:right;transform:scaleX(0.908);transform-origin:right top;top:176.44px;font-size:8.7px;line-height:8.7px;color:#6c6c6c;font-weight:normal;white-space:nowrap;">Letter Base Template</div>
<div style="position:absolute;right:303.20000000000005px;text-align:right;transform:scaleX(0.908);transform-origin:right top;top:200.44px;font-size:8.7px;line-height:8.7px;color:#6c6c6c;font-weight:normal;white-space:nowrap;">Fax Base Template</div>
<div style="position:absolute;right:303.20000000000005px;text-align:right;transform:scaleX(0.908);transform-origin:right top;top:277.94px;font-size:8.7px;line-height:8.7px;color:#6c6c6c;font-weight:normal;white-space:nowrap;">Write Menu - Recent Templates</div>
<div style="position:absolute;right:303.20000000000005px;text-align:right;transform:scaleX(0.908);transform-origin:right top;top:304.44px;font-size:8.7px;line-height:8.7px;color:#6c6c6c;font-weight:normal;white-space:nowrap;">Fax Provider</div>
<div style="position:absolute;right:303.20000000000005px;text-align:right;transform:scaleX(0.908);transform-origin:right top;top:344.84px;font-size:8.7px;line-height:8.7px;color:#6c6c6c;font-weight:normal;white-space:nowrap;">Log To History</div>
<div style="position:absolute;left:159.4px;top:126px;width:212.20000000000002px;height:14.5px;background:#fff;border:1px solid #dcdcdc;box-sizing:border-box"></div>
<div style="position:absolute;left:165.6px;transform:scaleX(0.95);transform-origin:left top;top:128.20px;font-size:9.8px;line-height:9.8px;color:#666;font-weight:normal;white-space:nowrap;">My Timesheet</div>
<div style="position:absolute;left:356.6px;top:132.25px;width:0;height:0;border-left:2.5px solid transparent;border-right:2.5px solid transparent;border-top:2.5px solid #9a9a9a"></div>
<div style="position:absolute;left:159px;top:148px;width:212.60000000000002px;height:16.5px;background:#e0e0e0;border:1px solid #dadada;box-sizing:border-box;border-radius:1px"></div>
<div style="position:absolute;left:165.6px;transform:scaleX(0.95);transform-origin:left top;top:153.00px;font-size:9.8px;line-height:9.8px;color:#222;font-weight:normal;white-space:nowrap;">Administrator</div>
<svg style="position:absolute;left:353.6px;top:150.75px" width="12" height="12" viewBox="0 0 12 12"><circle cx="5" cy="5" r="3.3" fill="none" stroke="#111" stroke-width="1.6"/><path d="M7.4 7.4l2.3 2.3" stroke="#111" stroke-width="1.9" stroke-linecap="round"/></svg>
<svg style="position:absolute;left:162.7px;top:176.8px" width="9.3" height="9.3" viewBox="0 0 10 10"><rect x="0" y="0" width="10" height="10" rx="1.2" fill="#1c8ee0"/><path d="M2 5.6l2.3 2.2 4-4.6" fill="none" stroke="#fff" stroke-width="1.8"/></svg>
<div style="position:absolute;left:246.7px;top:173px;width:32.10000000000002px;height:15.699999999999989px;background:#fff;border:1px solid #b4b4b4;border-bottom-color:#8a8a8a;border-right-color:#a0a0a0;box-sizing:border-box;border-radius:1px"></div>
<div style="position:absolute;left:254px;transform:scaleX(0.95);transform-origin:left top;top:176.50px;font-size:9.8px;line-height:9.8px;color:#111;font-weight:normal;white-space:nowrap;">90</div>
<div style="position:absolute;left:281.3px;top:172.7px;width:100.39999999999998px;height:16.100000000000023px;background:#fff;border:1px solid #dcdcdc;box-sizing:border-box"></div>
<div style="position:absolute;left:288.8px;transform:scaleX(0.95);transform-origin:left top;top:176.30px;font-size:9.8px;line-height:9.8px;color:#666;font-weight:normal;white-space:nowrap;">Minute(s)</div>
<div style="position:absolute;left:366.7px;top:179.75px;width:0;height:0;border-left:2.5px solid transparent;border-right:2.5px solid transparent;border-top:2.5px solid #9a9a9a"></div>
<svg style="position:absolute;left:162.7px;top:201.8px" width="9.3" height="9.3" viewBox="0 0 10 10"><rect x="0" y="0" width="10" height="10" rx="1.2" fill="#1c8ee0"/><path d="M2 5.6l2.3 2.2 4-4.6" fill="none" stroke="#fff" stroke-width="1.8"/></svg>
<div style="position:absolute;left:163px;top:226px;width:9.5px;height:9.5px;border:1px solid #8a8a8a;border-radius:1.5px;box-sizing:border-box;background:#fff"></div>
<svg style="position:absolute;left:162.7px;top:255.0px" width="9.3" height="9.3" viewBox="0 0 10 10"><rect x="0" y="0" width="10" height="10" rx="1.2" fill="#1c8ee0"/><path d="M2 5.6l2.3 2.2 4-4.6" fill="none" stroke="#fff" stroke-width="1.8"/></svg>
<div style="position:absolute;left:159.9px;top:276.1px;width:90.1px;height:14.399999999999977px;background:#3a7ec9;border-radius:2px"></div>
<div style="position:absolute;left:165.6px;transform:scaleX(0.908);transform-origin:left top;top:279.44px;font-size:8.7px;line-height:8.7px;color:#ffffff;font-weight:normal;white-space:nowrap;">Refresh Pick List Data</div>
<div style="position:absolute;left:158.6px;top:341.4px;width:213.00000000000003px;height:15.200000000000045px;background:#e2e2e2;border:1px solid #dcdcdc;box-sizing:border-box"></div>
<div style="position:absolute;left:166.1px;transform:scaleX(0.95);transform-origin:left top;top:345.30px;font-size:9.8px;line-height:9.8px;color:#5c5c5c;font-weight:normal;white-space:nowrap;">Sync ICRM (9 Contacts)</div>
<div style="position:absolute;left:356.6px;top:348.0px;width:0;height:0;border-left:2.5px solid transparent;border-right:2.5px solid transparent;border-top:2.5px solid #9a9a9a"></div>
<svg style="position:absolute;left:162.7px;top:403.8px" width="9.3" height="9.3" viewBox="0 0 10 10"><rect x="0" y="0" width="10" height="10" rx="1.2" fill="#1c8ee0"/><path d="M2 5.6l2.3 2.2 4-4.6" fill="none" stroke="#fff" stroke-width="1.8"/></svg>
<div style="position:absolute;left:585px;top:124.8px;width:212.5px;height:15.600000000000009px;background:#fff;border:1px solid #dcdcdc;box-sizing:border-box"></div>
<div style="position:absolute;left:593px;transform:scaleX(0.95);transform-origin:left top;top:127.90px;font-size:9.8px;line-height:9.8px;color:#777;font-weight:normal;white-space:nowrap;">Contact</div>
<div style="position:absolute;left:782.5px;top:131.6px;width:0;height:0;border-left:2.5px solid transparent;border-right:2.5px solid transparent;border-top:2.5px solid #9a9a9a"></div>
<div style="position:absolute;left:585px;top:149.4px;width:212.5px;height:13.199999999999989px;background:#fff;border:1px solid #7c7c7c;border-top-color:#a4a4a4;box-sizing:border-box;border-radius:1px"></div>
<div style="position:absolute;left:594px;transform:scaleX(0.95);transform-origin:left top;top:152.50px;font-size:9.8px;line-height:9.8px;color:#111;font-weight:normal;white-space:nowrap;">Thank You</div>
<svg style="position:absolute;left:779.5px;top:150.5px" width="12" height="12" viewBox="0 0 12 12"><circle cx="5" cy="5" r="3.3" fill="none" stroke="#111" stroke-width="1.6"/><path d="M7.4 7.4l2.3 2.3" stroke="#111" stroke-width="1.9" stroke-linecap="round"/></svg>
<div style="position:absolute;left:585px;top:173.4px;width:212.5px;height:13.199999999999989px;background:#fff;border:1px solid #7c7c7c;border-top-color:#a4a4a4;box-sizing:border-box;border-radius:1px"></div>
<div style="position:absolute;left:593.2px;transform:scaleX(0.95);transform-origin:left top;top:176.60px;font-size:9.8px;line-height:9.8px;color:#111;font-weight:normal;white-space:nowrap;">Base Letter</div>
<svg style="position:absolute;left:779.5px;top:174.5px" width="12" height="12" viewBox="0 0 12 12"><circle cx="5" cy="5" r="3.3" fill="none" stroke="#111" stroke-width="1.6"/><path d="M7.4 7.4l2.3 2.3" stroke="#111" stroke-width="1.9" stroke-linecap="round"/></svg>
<div style="position:absolute;left:585px;top:198.3px;width:212.5px;height:12.899999999999977px;background:#fff;border:1px solid #7c7c7c;border-top-color:#a4a4a4;box-sizing:border-box;border-radius:1px"></div>
<div style="position:absolute;left:593.2px;transform:scaleX(0.95);transform-origin:left top;top:201.30px;font-size:9.8px;line-height:9.8px;color:#111;font-weight:normal;white-space:nowrap;">Base FAX</div>
<svg style="position:absolute;left:779.5px;top:199.25px" width="12" height="12" viewBox="0 0 12 12"><circle cx="5" cy="5" r="3.3" fill="none" stroke="#111" stroke-width="1.6"/><path d="M7.4 7.4l2.3 2.3" stroke="#111" stroke-width="1.9" stroke-linecap="round"/></svg>
<div style="position:absolute;left:585px;top:274.2px;width:212.5px;height:15.400000000000034px;background:#fff;border:1px solid #8a8a8a;box-sizing:border-box"></div>
<div style="position:absolute;left:593.2px;transform:scaleX(0.95);transform-origin:left top;top:278.30px;font-size:9.8px;line-height:9.8px;color:#111;font-weight:normal;white-space:nowrap;">3</div>
<div style="position:absolute;left:585px;top:299.8px;width:212.5px;height:16.399999999999977px;background:#fff;border:1px solid #dcdcdc;box-sizing:border-box"></div>
<div style="position:absolute;left:592.6px;transform:scaleX(0.95);transform-origin:left top;top:304.30px;font-size:9.8px;line-height:9.8px;color:#444;font-weight:normal;white-space:nowrap;">Microsoft Fax Service (SalesLogix - Web)</div>
<div style="position:absolute;left:782.5px;top:307.0px;width:0;height:0;border-left:2.5px solid transparent;border-right:2.5px solid transparent;border-top:2.5px solid #9a9a9a"></div>
<div style="position:absolute;left:585px;top:340.9px;width:212.5px;height:16.200000000000045px;background:#fff;border:1px solid #dcdcdc;box-sizing:border-box"></div>
<div style="position:absolute;left:592px;transform:scaleX(0.95);transform-origin:left top;top:344.70px;font-size:9.8px;line-height:9.8px;color:#666;font-weight:normal;white-space:nowrap;">Prompt</div>
<div style="position:absolute;left:782.5px;top:348.0px;width:0;height:0;border-left:2.5px solid transparent;border-right:2.5px solid transparent;border-top:2.5px solid #9a9a9a"></div>
<div style="position:absolute;left:583px;top:393px;width:95.5px;height:17.19999999999999px;border:1.7px solid #cc3644;box-sizing:border-box;box-shadow:0 0.5px 1.5px rgba(100,0,0,0.45)"></div>
<div style="position:absolute;left:584.6px;top:394.5px;width:92.19999999999993px;height:14.0px;background:#1a9ae8"></div>
<div style="position:absolute;left:589.8px;transform:scaleX(0.908);transform-origin:left top;top:398.04px;font-size:8.7px;line-height:8.7px;color:#ffffff;font-weight:normal;white-space:nowrap;">Install Office Integration</div>
<div style="position:absolute;left:585px;top:420.8px;width:90.10000000000002px;height:13.800000000000011px;background:#1a9ae8"></div>
<div style="position:absolute;left:589.8px;transform:scaleX(0.908);transform-origin:left top;top:424.44px;font-size:8.7px;line-height:8.7px;color:#ffffff;font-weight:normal;white-space:nowrap;">Install Xbar for Outlook</div>
<div style="position:absolute;left:3.4px;top:489.37px;font-size:7px;line-height:7px;color:#777;font-weight:normal;white-space:nowrap;">www.infor.com</div>
<div style="position:absolute;left:623px;top:487.87px;font-size:7px;line-height:7px;color:#666;font-weight:normal;white-space:nowrap;">to Private Thursday, September 7, 2017</div>
<div style="position:absolute;left:797px;top:488.87px;font-size:7px;line-height:7px;color:#666;font-weight:normal;white-space:nowrap;">00</div>
<div style="position:absolute;left:244px;top:1px;width:32px;height:20.8px;border:2px solid #dc4650;box-sizing:border-box;box-shadow:0.5px 0.5px 1.5px rgba(0,0,0,0.4)"></div>
<div style="position:absolute;left:0px;top:54.8px;width:49.8px;height:20.400000000000006px;border:2px solid #dc4650;box-sizing:border-box;box-shadow:0.5px 0.5px 1.5px rgba(90,0,0,0.35)"></div>
<svg style="position:absolute;left:0;top:0" width="879" height="509"><line x1="245" y1="21.5" x2="64" y2="35.5" stroke="#e2424e" stroke-width="2"/><path d="M61.5 35.6 L67 32.8 L66.5 38.2 Z" fill="#e2424e"/></svg>
</div>
<svg style="position:absolute;left:0;top:0" width="879" height="509"><polyline points="855.3,0.0 857.89,0.8 860.49,1.6 862.72,3.27 865.3,4.1 864.7,7.7 864.4,9.98 863.0,11.8 860.03,13.2 857.1,14.7 858.8,16.13 860.67,17.4 861.8,19.4 862.99,21.51 864.2,23.6 864.7,26.0 862.58,28.11 859.82,29.21 857.3,30.7 859.04,32.78 859.7,35.4 858.99,37.67 857.39,39.39 856.1,41.3 857.14,44.45 859.0,47.2 860.4,49.68 860.8,52.5 863.18,53.65 865.03,55.58 867.3,56.9 864.11,57.52 861.4,59.3 859.0,62.8 862.4,64.7 864.4,68.2 862.05,69.24 859.86,70.6 857.5,71.6 856.0,75.5 855.84,78.56 857.0,81.4 858.44,83.84 858.19,86.82 859.5,89.3 860.89,91.12 862.2,92.98 862.9,95.2 860.7,97.1 858.1,98.3 855.5,99.5 855.06,101.75 855.5,104.0 857.39,105.26 858.56,107.22 860.08,108.85 861.91,110.16 863.31,111.9 865.36,113.0 866.5,115.0 864.77,116.78 862.61,117.85 860.22,118.53 858.3,120.0 860.44,121.93 862.61,123.81 864.5,126.0 862.17,127.23 860.0,128.72 857.7,130.0 859.29,131.76 860.08,134.08 861.55,135.92 863.43,137.47 864.5,139.6 863.23,141.53 862.11,143.54 860.51,145.27 859.5,147.36 858.6,149.5 858.31,151.87 856.79,153.94 857.38,156.53 856.39,158.73 855.7,161.0 855.84,164.06 856.7,167.0 858.74,168.13 860.16,169.99 862.3,171.01 863.6,173.0 861.94,174.51 860.36,176.09 859.07,177.93 857.27,179.32 856.38,181.51 854.7,183.0 855.45,185.67 856.58,188.18 857.7,190.7 858.97,192.55 860.47,194.22 861.4,196.33 862.65,198.2 864.5,199.6 862.77,201.39 860.82,202.96 859.65,205.31 857.26,206.44 855.7,208.4 856.48,210.88 857.01,213.46 858.21,215.77 859.6,218.0 860.88,220.34 861.6,222.9 860.51,224.94 858.95,226.67 858.49,229.11 856.7,230.7 857.97,232.65 859.54,234.41 860.83,236.34 861.6,238.6 861.18,241.42 859.25,243.67 858.6,246.4 860.4,250.0 860.27,252.75 859.48,255.35 858.5,257.9 860.64,259.15 862.31,261.08 864.98,261.54 866.7,263.4 865.79,265.58 864.69,267.67 863.29,269.63 862.8,272.0 860.73,273.24 858.91,274.77 857.68,276.96 855.7,278.3 857.5,279.58 859.27,280.9 860.54,282.85 862.6,283.8 862.35,286.24 863.84,288.4 864.19,290.75 864.49,293.1 864.5,295.5 863.86,297.64 862.57,299.46 861.46,301.37 860.6,303.4 861.67,305.75 862.76,308.1 862.96,310.72 863.6,313.2 864.72,315.48 865.5,317.9 864.04,319.81 862.22,321.45 861.14,323.63 859.96,325.73 858.6,327.7 859.63,330.13 860.74,332.53 862.7,334.5 862.82,337.39 864.5,339.5 862.5,340.55 860.66,341.81 858.97,343.25 857.55,345.06 855.7,346.3 857.19,347.99 858.9,349.52 859.69,351.76 861.7,353.04 862.6,355.2 862.16,357.88 860.98,360.25 860.04,362.73 858.6,365.0 859.64,367.22 860.86,369.39 861.76,371.66 862.39,374.03 863.29,376.31 863.6,378.8 861.77,380.9 860.14,383.2 857.7,384.7 859.71,386.45 862.15,387.44 864.5,388.6 862.85,390.47 860.81,391.83 858.78,393.2 856.7,394.5 857.21,396.76 857.86,398.99 857.17,401.42 857.28,403.73 858.33,405.91 858.6,408.2 856.98,410.21 855.78,412.57 853.7,414.2 855.98,414.72 857.87,416.04 859.95,416.96 861.63,418.68 864.08,418.86 865.9,420.3 864.67,422.47 862.05,423.25 860.8,425.4 861.04,427.95 861.84,430.45 861.56,433.06 861.9,435.6 861.49,438.4 859.81,440.69 858.2,443.0 857.8,445.8 857.7,448.32 858.33,450.72 859.33,453.07 859.58,455.53 859.8,458.0 859.22,460.27 857.46,461.97 856.8,464.2 857.76,466.77 858.44,469.44 860.02,471.76 860.8,474.4 862.65,475.8 863.62,478.03 865.5,479.4 862.93,479.93 860.75,481.23 858.7,482.8 856.73,483.87 855.02,485.26 853.6,487.0 850.94,487.58 848.5,488.8 845.0,486.2 842.45,486.58 839.9,486.2 837.62,487.88 835.49,489.76 833.1,491.3 830.93,490.07 829.23,488.37 828.0,486.2 824.6,486.2 822.48,488.15 820.2,489.87 817.7,491.3 814.84,491.33 811.97,491.26 809.2,492.2 807.1,493.12 804.72,493.33 802.57,494.12 800.7,495.6 798.5,493.37 795.6,492.2 793.31,492.31 791.02,492.44 788.74,492.36 786.45,492.32 784.17,492.24 781.91,491.58 779.64,491.11 777.35,491.12 775.05,491.55 772.77,491.24 770.5,490.96 768.2,491.3 765.47,491.0 763.1,489.6 760.56,489.24 758.03,488.76 755.47,488.81 752.92,488.72 750.35,488.96 747.8,488.8 745.69,490.2 743.07,490.39 741.04,491.97 738.5,492.35 736.12,493.11 734.1,494.7 732.3,493.1 730.6,491.4 729.0,489.6 728.0,489.6 725.52,489.1 723.1,489.54 720.7,490.45 718.26,490.64 715.81,490.73 713.31,489.81 710.9,490.5 708.69,490.07 706.48,491.0 704.27,490.04 702.06,489.83 699.84,490.28 697.63,490.71 695.42,490.43 693.21,491.02 691.0,490.5 689.17,492.79 686.5,494.0 683.98,493.7 681.62,494.49 679.22,495.01 676.71,494.8 674.39,495.84 671.88,495.58 669.46,496.0 667.1,496.8 664.7,496.28 662.6,495.0 660.32,495.35 658.03,495.29 655.75,495.36 653.47,494.88 651.18,495.34 648.9,495.0 646.93,493.59 644.78,492.41 643.2,490.5 640.46,489.39 637.5,489.4 635.77,491.25 633.81,492.84 631.9,494.5 629.96,493.13 628.2,491.47 625.84,490.77 623.9,489.4 621.37,488.72 618.8,489.2 616.25,489.06 613.7,489.0 611.95,490.48 610.69,492.51 608.58,493.56 606.8,495.0 604.81,493.83 602.94,492.52 601.98,490.19 600.0,489.0 597.69,487.98 595.9,486.2 594.73,488.28 593.23,490.16 592.23,492.34 591.31,494.56 589.9,496.5 587.65,494.75 585.41,492.97 583.1,491.3 580.68,490.79 578.19,491.62 575.78,490.87 573.31,491.19 570.87,491.04 568.46,490.23 566.0,490.5 564.03,492.09 562.01,493.63 560.1,495.3 559.01,493.26 557.8,491.31 555.9,489.89 554.71,487.92 553.2,486.2 552.17,488.26 551.14,490.31 549.9,492.26 549.18,494.47 548.1,496.5 546.43,494.73 544.68,493.05 543.0,491.3 540.9,492.26 539.42,493.95 537.9,495.6 536.12,493.08 533.6,491.3 531.28,490.44 528.81,491.15 526.47,490.5 524.14,489.72 521.7,490.1 519.43,489.21 516.91,489.75 514.56,489.35 512.3,488.4 510.35,489.83 508.64,491.63 506.3,492.5 503.79,493.11 501.2,493.0 498.39,492.29 496.1,490.5 493.85,491.34 491.63,492.24 489.41,493.15 487.5,494.7 485.33,493.83 483.87,491.9 481.93,490.69 479.9,489.6 477.38,487.64 475.6,485.0 472.64,484.22 469.6,484.5 467.17,486.04 465.95,488.78 463.7,490.5 461.0,490.27 458.5,491.3 456.89,492.84 455.11,494.18 453.4,495.6 453.19,493.2 452.13,491.13 450.41,489.32 450.0,487.0 447.19,486.83 444.4,486.44 441.6,486.2 439.12,487.26 436.5,487.9 434.71,489.72 432.57,491.07 430.2,492.09 428.74,494.36 426.3,495.3 424.03,495.07 421.74,495.07 419.42,495.51 417.17,494.91 414.92,494.35 412.63,494.35 410.31,494.82 408.12,493.38 405.8,493.9 403.36,493.63 400.93,493.51 398.58,494.85 396.15,494.76 393.75,495.21 391.3,494.7 389.62,492.82 387.25,491.8 385.2,490.38 383.6,488.4 381.56,489.94 379.4,491.3 377.65,489.81 375.59,488.96 373.4,488.4 371.05,490.57 368.3,492.2 365.48,492.96 362.51,492.15 359.7,493.0 357.18,492.06 354.69,491.03 351.87,491.0 349.5,489.6 347.14,488.71 345.65,486.58 343.5,485.4 342.52,487.77 341.89,490.3 339.72,492.12 339.2,494.7 336.89,495.12 334.56,495.49 332.4,496.5 329.36,496.63 326.5,495.6 325.9,493.42 323.89,492.01 323.83,489.54 322.28,487.87 321.3,485.9 319.49,487.87 317.32,489.45 315.4,491.3 312.53,490.7 309.67,491.62 306.8,491.3 304.81,493.17 302.25,494.13 300.0,495.6 297.71,494.64 295.52,493.52 293.45,492.18 291.6,490.5 289.21,491.76 286.5,491.8 284.2,492.05 281.95,491.73 279.7,491.3 277.79,489.32 276.3,487.0 273.35,486.24 270.3,486.2 268.06,487.45 265.6,488.15 263.42,489.54 260.9,490.1 258.69,490.43 256.5,491.01 254.26,490.81 252.06,491.26 249.78,490.37 247.58,490.75 245.38,491.37 243.14,491.1 240.89,490.57 238.7,491.3 236.14,490.33 234.41,488.06 231.9,487.0 229.35,487.09 226.8,487.0 225.1,488.74 223.07,490.14 221.7,492.2 219.06,490.42 216.6,488.4 214.86,489.76 212.97,490.93 211.4,492.5 210.2,490.21 207.84,488.98 206.3,487.0 203.6,487.46 201.2,488.8 198.93,488.44 196.64,488.48 194.35,488.73 192.06,488.75 189.77,489.09 187.5,488.4 184.0,490.5 181.75,491.02 179.5,491.1 177.25,490.16 175.0,490.84 172.75,490.97 170.5,490.5 167.95,489.74 166.2,487.55 163.7,486.7 161.1,486.18 158.5,486.7 156.25,487.87 154.42,489.71 152.32,491.13 150.0,492.2 147.7,492.05 145.49,491.39 143.16,491.37 140.99,490.54 138.69,490.36 136.5,489.6 134.23,488.95 131.97,488.94 129.7,489.53 127.43,489.96 125.17,488.95 122.9,489.6 120.76,491.51 118.42,493.16 116.0,494.7 113.99,492.47 113.05,489.65 111.8,487.0 109.64,486.48 107.5,485.9 104.95,487.75 102.4,489.6 99.9,490.66 97.2,490.89 94.77,492.22 92.0,492.2 89.31,490.77 87.0,488.8 84.35,488.92 81.9,487.9 80.27,489.51 78.87,491.38 77.16,492.9 75.0,493.9 72.46,494.31 69.92,494.54 67.34,494.18 64.8,494.39 62.23,494.22 59.7,494.7 57.32,494.48 54.94,494.4 52.56,494.17 50.18,494.85 47.8,494.7 45.44,494.37 43.36,492.91 40.78,493.48 38.68,492.13 36.35,491.67 34.0,491.3 31.57,491.94 29.14,490.83 26.71,490.75 24.29,491.12 21.86,490.97 19.43,490.86 17.0,491.3 14.79,492.63 12.23,492.99 9.86,493.87 7.32,494.3 5.1,495.6 3.7,493.6 2.02,491.88 0,490.5" fill="none" stroke="#3c3c3c" stroke-width="0.75"/></svg>
</body></html>
